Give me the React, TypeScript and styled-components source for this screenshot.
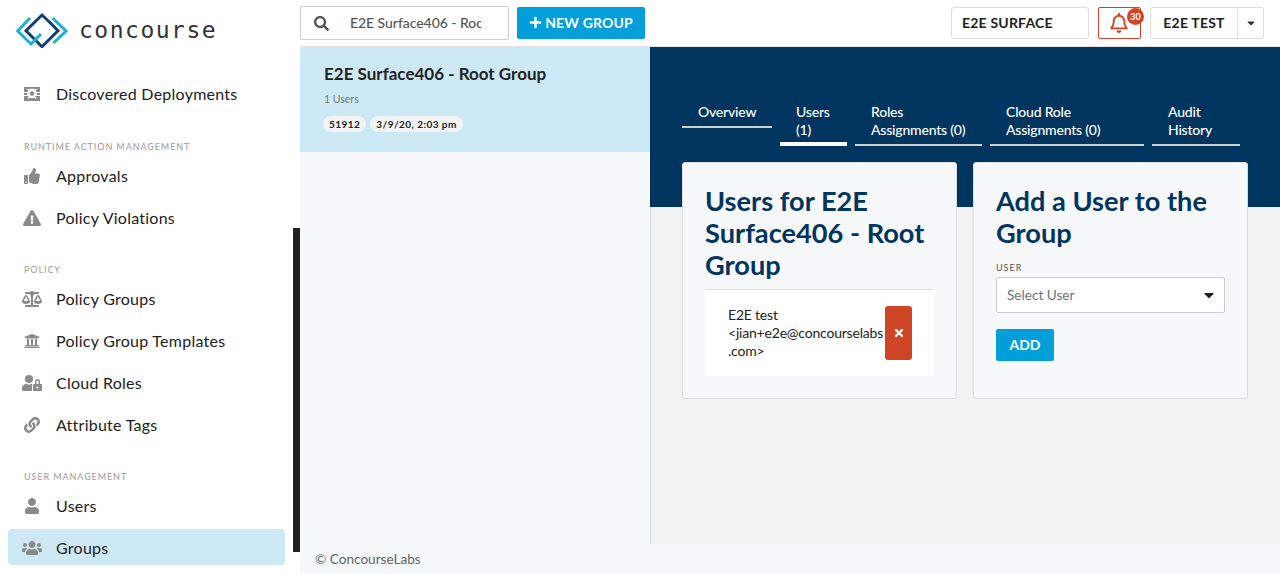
import React from "react";
import styled, { createGlobalStyle } from "styled-components";
import {
  FaBalanceScale,
  FaCaretDown,
  FaExclamationTriangle,
  FaLink,
  FaPlus,
  FaRegBell,
  FaSearch,
  FaThumbsUp,
  FaTimes,
  FaUniversity,
  FaUser,
  FaUserLock,
  FaUsers,
} from "react-icons/fa";

const NAVY = "#00355f";
const BLUE = "#009fda";
const RED = "#cf4626";

const GlobalStyle = createGlobalStyle`
  * { box-sizing: border-box; }
  html, body { margin: 0; height: 100%; overflow: hidden; }
  body { font-family: Lato, "Liberation Sans", sans-serif; color: #222; background: #fff; }
`;

const DiscoveredIcon = () => (
  <svg viewBox="0 0 16 14" fill="#8a8a8a">
    <path d="M0 0h16v5h-3.4a4 4 0 0 0-.9-1.6L13 2.2 12 1.4l-1.4 1.2a4 4 0 0 0-5.2 0L4 1.4l-1 .8 1.3 1.2A4 4 0 0 0 3.4 5H0z" />
    <path d="M0 6h3.2a4.8 4.8 0 0 0 .3 2H0zM12.8 6H16v2h-3.5a4.8 4.8 0 0 0 .3-2zM0 9h4.2l.6.8L3.4 11l.9.9L6 10.6a4 4 0 0 0 4 0l1.7 1.3.9-.9-1.4-1.2.6-.8H16v5H0z" />
    <circle cx="8" cy="6.5" r="2.2" />
  </svg>
);

const Logo = () => (
  <svg width="52" height="36" viewBox="0 0 52 36" fill="none" strokeWidth="3">
    <path stroke="#123f6d" d="M37.500 14 26 3 10 18.800 26 34.700 42 18.800 33.500 10" />
    <path stroke="#fff" strokeWidth="6" d="M21 26 25 22" />
    <path stroke="#1fb0d2" d="M14 6 1.700 19 15 32 25 22" />
    <path stroke="#1fb0d2" d="M36.500 6 50 19 37.500 31" />
  </svg>
);

const Page = styled.div`
  display: flex;
  width: 1280px;
  height: 574px;
  overflow: hidden;
`;

const Sidebar = styled.aside`
  position: relative;
  flex: 0 0 300px;
  background: #fff;
`;

const ScrollThumb = styled.div`
  position: absolute;
  left: 293px;
  top: 228px;
  width: 7px;
  height: 324px;
  background: #231f20;
`;

const Brand = styled.header`
  display: flex;
  align-items: center;
  gap: 11px;
  height: 47px;
  padding: 13px 0 0 16px;
  margin-bottom: 28px;
`;

const BrandName = styled.span`
  font-family: "DejaVu Sans Mono", monospace;
  font-size: 23px;
  letter-spacing: 1.500px;
  color: #333;
  line-height: 1;
`;

const NavSection = styled.section`
  display: flex;
  flex-direction: column;
  gap: 6px;
  margin-bottom: 27px;
  &:first-of-type {
    margin-bottom: 28px;
  }
`;

const SectionLabel = styled.div`
  height: 12px;
  padding-left: 24px;
  font-size: 9px;
  font-weight: 500;
  line-height: 16px;
  letter-spacing: 0.9px;
  color: #a3a3a3;
  text-transform: uppercase;
`;

const NavItem = styled.div<{ $active?: boolean }>`
  display: flex;
  align-items: center;
  width: 277px;
  height: 36px;
  margin-left: 8px;
  padding-top: 1px;
  border-radius: 4px;
  font-size: 16px;
  letter-spacing: 0.25px;
  color: #222;
  background: ${(p) => (p.$active ? "#cde9f5" : "transparent")};
`;

const NavIcon = styled.span<{ $width: number }>`
  display: flex;
  justify-content: center;
  width: 48px;
  color: #8a8a8a;
  svg {
    width: ${(p) => p.$width}px;
    height: 16px;
  }
`;

const Main = styled.div`
  flex: 1;
  display: flex;
  flex-direction: column;
  min-width: 0;
`;

const TopBar = styled.header`
  display: flex;
  align-items: center;
  height: 47px;
  padding-right: 16px;
  border-bottom: 1px solid #e4e4e4;
`;

const SearchBox = styled.label`
  display: flex;
  align-items: center;
  width: 209px;
  height: 34px;
  padding: 0 27px 0 13px;
  border: 1px solid #ccc;
  border-radius: 2px;
  color: #555;
  font-size: 15px;
  svg {
    flex: none;
  }
`;

const SearchInput = styled.input`
  width: 100%;
  min-width: 0;
  margin-left: 21px;
  padding: 0 0 2px;
  border: 0;
  outline: 0;
  font-family: inherit;
  font-size: 14px;
  font-weight: 500;
  letter-spacing: -0.05px;
  color: #555;
  background: transparent;
`;

const NewGroupButton = styled.button`
  display: flex;
  align-items: center;
  justify-content: center;
  gap: 3px;
  width: 128px;
  height: 32px;
  margin-left: 8px;
  padding: 0 0 2px;
  border: 0;
  border-radius: 2px;
  background: ${BLUE};
  color: #fff;
  font-family: inherit;
  font-size: 14px;
  font-weight: 700;
  letter-spacing: 0.15px;
`;

const Spacer = styled.div`
  flex: 1;
`;

const OrgBox = styled.div`
  display: flex;
  align-items: center;
  width: 138px;
  height: 32px;
  padding: 0 0 2px 10px;
  border: 1px solid #ddd;
  border-radius: 3px;
  font-size: 14px;
  font-weight: 700;
  letter-spacing: 0.2px;
  color: #222;
`;

const BellButton = styled.div`
  position: relative;
  display: flex;
  align-items: center;
  justify-content: center;
  width: 43px;
  height: 32px;
  margin: 0 9px;
  padding-right: 1px;
  border: 1px solid ${RED};
  border-radius: 2px;
  color: ${RED};
  font-size: 20px;
`;

const Badge = styled.span`
  position: absolute;
  top: 0;
  right: -4px;
  width: 17px;
  height: 17px;
  border-radius: 50%;
  background: ${RED};
  color: #fff;
  font-size: 9px;
  font-weight: 700;
  line-height: 17px;
  text-align: center;
`;

const UserMenu = styled.div`
  display: flex;
  height: 32px;
  border: 1px solid #ddd;
  border-radius: 3px;
`;

const UserName = styled.div`
  display: flex;
  align-items: center;
  justify-content: center;
  width: 87px;
  padding-bottom: 2px;
  border-right: 1px solid #ddd;
  font-size: 14px;
  font-weight: 700;
  letter-spacing: 0.2px;
`;

const UserCaret = styled.div`
  display: flex;
  align-items: center;
  justify-content: center;
  width: 25px;
  font-size: 12px;
  color: #333;
`;

const Body = styled.div`
  flex: 1;
  display: flex;
  min-height: 0;
`;

const ListPanel = styled.div`
  position: relative;
  flex: 0 0 350px;
  background: #f4f8fb;
  box-shadow: 1px 0 1px rgba(0, 0, 0, 0.08);
`;

const GroupCard = styled.div`
  height: 105px;
  padding: 17px 23px 0 24px;
  background: #cde9f5;
`;

const GroupTitle = styled.div`
  font-size: 17px;
  font-weight: 700;
  line-height: 20px;
  color: #222;
`;

const GroupMeta = styled.div`
  margin-top: 8px;
  font-size: 10.500px;
  line-height: 14px;
  color: #6f7b82;
`;

const Pills = styled.div`
  display: flex;
  gap: 4px;
  margin: 10px 0 0 -1px;
`;

const Pill = styled.span`
  height: 16px;
  padding: 0 6px;
  border-radius: 8px;
  background: #f1f3f4;
  font-size: 10px;
  font-weight: 700;
  line-height: 16px;
  letter-spacing: 0.45px;
  color: #222;
`;

const Detail = styled.main`
  flex: 1;
  padding: 56px 32px 0;
  background: linear-gradient(${NAVY} 160px, #f2f2f2 160px);
`;

const Tabs = styled.nav`
  display: flex;
  align-items: flex-start;
  gap: 8px;
  margin-bottom: 16px;
`;

const Tab = styled.div<{ $active?: boolean; $width: number }>`
  width: ${(p) => p.$width}px;
  padding: 0 10px ${(p) => (p.$active ? "3px" : "5px")} 16px;
  border-bottom: ${(p) => (p.$active ? "4px solid #fff" : "2px solid #cfcfcf")};
  color: #fff;
  font-size: 14px;
  font-weight: 500;
  line-height: 18px;
  letter-spacing: -0.2px;
`;

const Cards = styled.div`
  display: flex;
  gap: 16px;
`;

const Card = styled.section`
  width: 275px;
  height: 237px;
  padding: 22px 22px 0;
  border: 1px solid #ddd;
  border-radius: 3px;
  background: #f7f8fa;
`;

const CardTitle = styled.h2`
  margin: 0;
  color: ${NAVY};
  font-size: 27.200px;
  font-weight: 700;
  line-height: 32px;
`;

const UserRow = styled.div`
  display: flex;
  align-items: center;
  justify-content: space-between;
  width: 229px;
  height: 87px;
  margin-top: 8px;
  padding: 0 22px 0 23px;
  border-top: 1px solid #ddd;
  background: #fff;
  font-size: 14px;
  line-height: 18px;
  color: #222;
`;

const UserEmail = styled.div`
  width: 157px;
  letter-spacing: -0.2px;
`;

const RemoveButton = styled.button`
  display: flex;
  align-items: center;
  justify-content: center;
  flex: 0 0 27px;
  height: 54px;
  padding: 0;
  border: 0;
  border-radius: 3px;
  background: ${RED};
  color: #fff;
  font-size: 12px;
`;

const FieldLabel = styled.div`
  margin-top: 13px;
  font-size: 9px;
  line-height: 12px;
  letter-spacing: 1px;
  color: #555;
`;

const SelectBox = styled.div`
  display: flex;
  align-items: center;
  justify-content: space-between;
  width: 229px;
  height: 36px;
  margin-top: 3px;
  padding: 0 7px 0 10px;
  border: 1px solid #ccc;
  border-radius: 2px;
  background: #fff;
  font-size: 13.600px;
  color: #6b7278;
`;

const SelectCaret = styled.span`
  display: flex;
  color: #222;
  font-size: 16px;
`;

const AddButton = styled.button`
  display: block;
  width: 58px;
  height: 32px;
  margin-top: 16px;
  padding: 0 0 2px;
  border: 0;
  border-radius: 2px;
  background: ${BLUE};
  color: #fff;
  font-family: inherit;
  font-size: 14px;
  font-weight: 700;
`;

const Footer = styled.footer`
  position: relative;
  display: flex;
  align-items: center;
  height: 30px;
  padding-left: 15px;
  background: #f4f8fb;
  font-size: 13.600px;
  color: #666;
`;

const sections = [
  { items: [{ label: "Discovered Deployments", icon: <DiscoveredIcon />, iconWidth: 16 }] },
  {
    title: "Runtime Action Management",
    items: [
      { label: "Approvals", icon: <FaThumbsUp />, iconWidth: 16 },
      { label: "Policy Violations", icon: <FaExclamationTriangle />, iconWidth: 18 },
    ],
  },
  {
    title: "Policy",
    items: [
      { label: "Policy Groups", icon: <FaBalanceScale />, iconWidth: 20 },
      { label: "Policy Group Templates", icon: <FaUniversity />, iconWidth: 16 },
      { label: "Cloud Roles", icon: <FaUserLock />, iconWidth: 20 },
      { label: "Attribute Tags", icon: <FaLink />, iconWidth: 16 },
    ],
  },
  {
    title: "User Management",
    items: [
      { label: "Users", icon: <FaUser />, iconWidth: 16 },
      { label: "Groups", icon: <FaUsers />, iconWidth: 20, active: true },
    ],
  },
];

const tabs = [
  { label: "Overview", width: 90 },
  { label: "Users (1)", width: 67, active: true },
  { label: "Roles Assignments (0)", width: 127 },
  { label: "Cloud Role Assignments (0)", width: 154 },
  { label: "Audit History", width: 88 },
];

const App = () => {
  return (
    <Page>
      <GlobalStyle />
      <Sidebar>
        <Brand>
          <Logo />
          <BrandName>concourse</BrandName>
        </Brand>
        {sections.map((section, i) => (
          <NavSection key={i}>
            {section.title && <SectionLabel>{section.title}</SectionLabel>}
            {section.items.map((item) => (
              <NavItem key={item.label} $active={"active" in item}>
                <NavIcon $width={item.iconWidth}>{item.icon}</NavIcon>
                {item.label}
              </NavItem>
            ))}
          </NavSection>
        ))}
        <ScrollThumb />
      </Sidebar>
      <Main>
        <TopBar>
          <SearchBox>
            <FaSearch />
            <SearchInput readOnly value="E2E Surface406 - Root Group" />
          </SearchBox>
          <NewGroupButton>
            <FaPlus size={13} />
            NEW GROUP
          </NewGroupButton>
          <Spacer />
          <OrgBox>E2E SURFACE</OrgBox>
          <BellButton>
            <FaRegBell />
            <Badge>30</Badge>
          </BellButton>
          <UserMenu>
            <UserName>E2E TEST</UserName>
            <UserCaret>
              <FaCaretDown />
            </UserCaret>
          </UserMenu>
        </TopBar>
        <Body>
          <ListPanel>
            <GroupCard>
              <GroupTitle>E2E Surface406 - Root Group</GroupTitle>
              <GroupMeta>1 Users</GroupMeta>
              <Pills>
                <Pill>51912</Pill>
                <Pill>3/9/20, 2:03 pm</Pill>
              </Pills>
            </GroupCard>
          </ListPanel>
          <Detail>
            <Tabs>
              {tabs.map((tab) => (
                <Tab key={tab.label} $active={tab.active} $width={tab.width}>
                  {tab.label}
                </Tab>
              ))}
            </Tabs>
            <Cards>
              <Card>
                <CardTitle>Users for E2E Surface406 - Root Group</CardTitle>
                <UserRow>
                  <UserEmail>
                    E2E test &lt;jian+e2e@concourselabs<wbr />.com&gt;
                  </UserEmail>
                  <RemoveButton>
                    <FaTimes />
                  </RemoveButton>
                </UserRow>
              </Card>
              <Card>
                <CardTitle>Add a User to the Group</CardTitle>
                <FieldLabel>USER</FieldLabel>
                <SelectBox>
                  Select User
                  <SelectCaret>
                    <FaCaretDown />
                  </SelectCaret>
                </SelectBox>
                <AddButton>ADD</AddButton>
              </Card>
            </Cards>
          </Detail>
        </Body>
        <Footer>© ConcourseLabs</Footer>
      </Main>
    </Page>
  );
};

export default App;
